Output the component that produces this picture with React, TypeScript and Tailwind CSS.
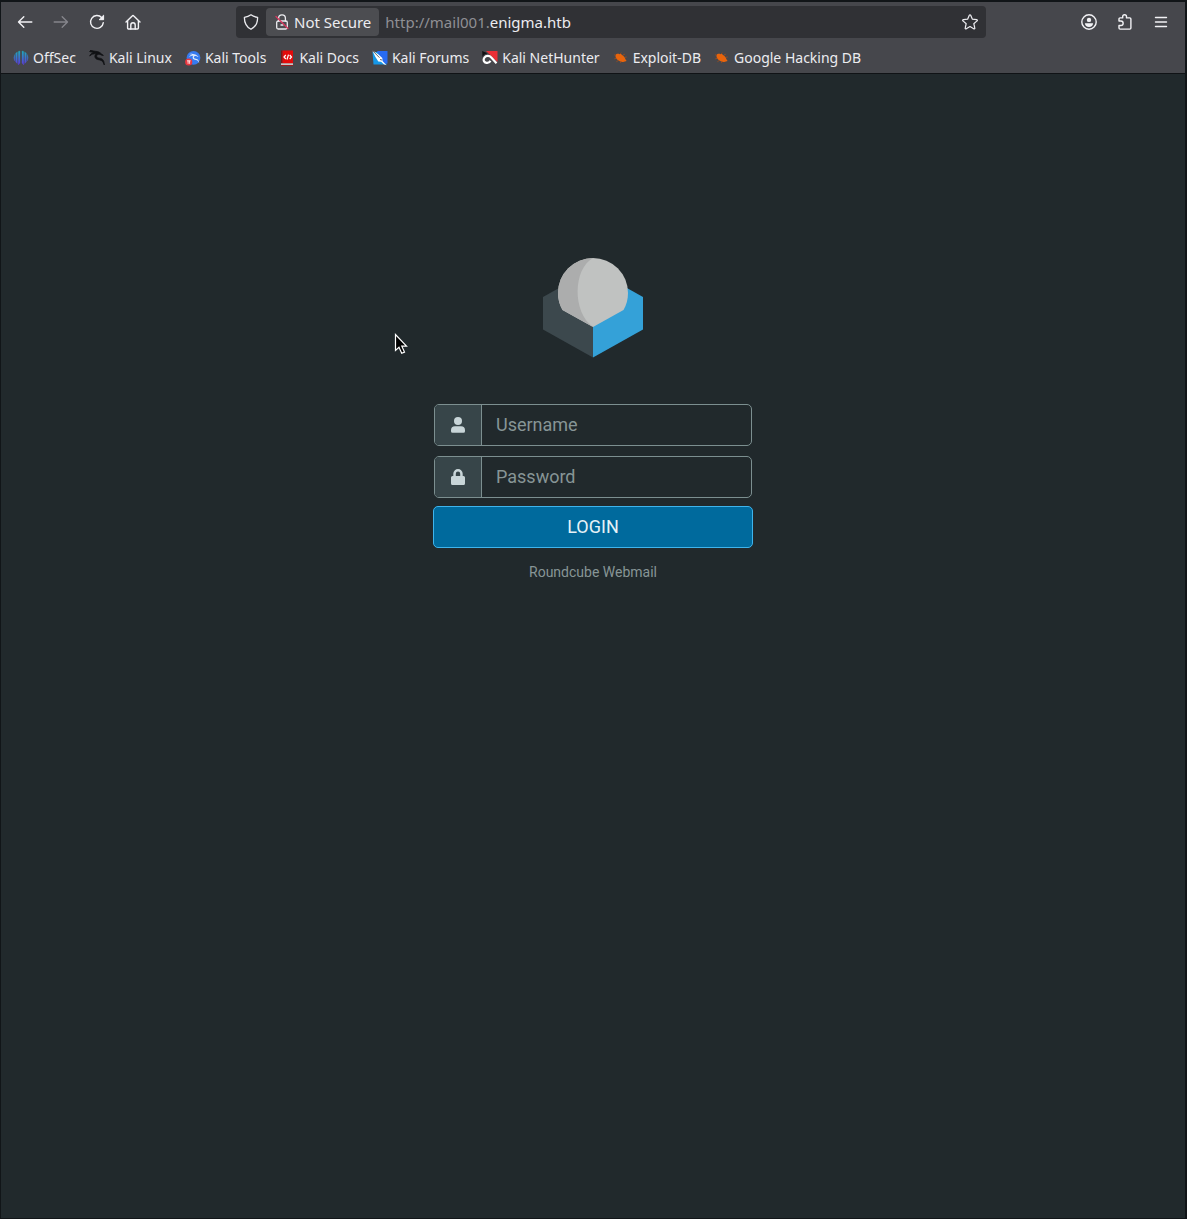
import { useState } from 'react';
import type { ReactNode } from 'react';

const iconProps = {
  width: 16,
  height: 16,
  viewBox: '0 0 16 16',
  fill: 'none',
  stroke: 'currentColor',
  strokeWidth: 1.4,
  strokeLinecap: 'round',
  strokeLinejoin: 'round',
  'aria-hidden': true
} as const;

const BackIcon = () => (
  <svg {...iconProps}>
    <path d="M14.8 8H1.6M6.8 2.7L1.5 8l5.3 5.3" />
  </svg>
);

const ForwardIcon = () => (
  <svg {...iconProps}>
    <path d="M1.2 8h13.2M9.2 2.7L14.5 8l-5.3 5.3" />
  </svg>
);

const ReloadIcon = () => (
  <svg {...iconProps}>
    <path d="M14.3 8.6A6.4 6.4 0 1 1 12.8 3.8" />
    <path d="M14.6 1.6v4.1h-4.1z" fill="currentColor" strokeWidth="1" />
  </svg>
);

const HomeIcon = () => (
  <svg {...iconProps}>
    <path d="M1 8.1l6.2-6.2a1.1 1.1 0 0 1 1.6 0L15 8.1" />
    <path d="M2.6 7v6.9a1.1 1.1 0 0 0 1.1 1.1h8.6a1.1 1.1 0 0 0 1.1-1.1V7" />
    <path d="M5.8 15v-4a2.2 2.2 0 0 1 4.4 0v4" />
  </svg>
);

const ShieldIcon = () => (
  <svg {...iconProps} strokeWidth={1.3}>
    <path d="M8 .8c1.900 1.400 4 2.200 6.600 2.500.1 5.400-1.500 9.300-6.600 12C2.900 12.600 1.300 8.700 1.400 3.300 4 3 6.100 2.200 8 .8z" />
  </svg>
);

const InsecureIcon = () => (
  <svg {...iconProps} strokeWidth={1.3}>
    <path d="M4.600 7V4.200a3.400 3.400 0 0 1 6.800 0V7" />
    <rect x="2.700" y="7" width="10.600" height="8" rx="1.500" />
    <path d="M7 11h2" />
    <path d="M2 2.500l12 12" stroke="#d9375f" />
  </svg>
);

const StarIcon = () => (
  <svg {...iconProps} strokeWidth={1.2}>
    <path d="M7.300 1.300a.8.8 0 0 1 1.400 0l1.700 3.900 4.200.4a.7.7 0 0 1 .4 1.300l-3.200 2.800 1 4.300a.7.7 0 0 1-1.100.8L8 12.500l-3.700 2.300a.7.7 0 0 1-1.100-.8l1-4.300L1 6.900a.7.7 0 0 1 .4-1.300l4.200-.4z" />
  </svg>
);

const AccountIcon = () => (
  <svg {...iconProps}>
    <circle cx="8" cy="8" r="7.200" />
    <circle cx="8" cy="5.900" r="2.200" fill="currentColor" stroke="none" />
    <path d="M3.900 9.300h8.200c0 2.300-1.800 3.700-4.100 3.700s-4.100-1.400-4.100-3.700z" fill="currentColor" stroke="none" />
  </svg>
);

const ExtensionsIcon = () => (
  <svg {...iconProps}>
    <path d="M2 7V5a1.100 1.100 0 0 1 1.100-1.100h2.600V2.600a1.900 1.900 0 0 1 3.800 0v1.300h3.300A1.100 1.100 0 0 1 13.900 5v9a1.100 1.100 0 0 1-1.100 1.100H3.100A1.100 1.100 0 0 1 2 14v-2.500h1.900a2 2 0 0 0 0-4.500z" />
  </svg>
);

const MenuIcon = () => (
  <svg {...iconProps}>
    <path d="M2.500 3.500h11M2.500 8h11M2.500 12.500h11" />
  </svg>
);

const OffSecIcon = () => (
  <svg width="16" height="16" viewBox="0 0 16 16" fill="none" aria-hidden>
    <defs>
      <linearGradient id="offsec" x1="0" y1="0" x2="0" y2="16" gradientUnits="userSpaceOnUse">
        <stop offset="0.1" stopColor="#1fa6bd" />
        <stop offset="0.9" stopColor="#5a3be0" />
      </linearGradient>
    </defs>
    <path
      d="M7 1v12l-1.700 2V1.400zM4.300 2v11.500L2.700 12V3.200zM1.700 4.500v6.500a7 7 0 0 1 0-6.500zM9 1v12l1.700 2V1.400zM11.700 2v11.500l1.600-1.500V3.200zM14.300 4.500v6.500a7 7 0 0 0 0-6.500z"
      fill="url(#offsec)"
      stroke="url(#offsec)"
      strokeWidth=".3"
    />
  </svg>
);

const dragon =
  'M.5 1.500l4.500.2-4-1.200 5.500.8c2.500.1 4.500 1 5.600 2.400l2.300 1.700-1.700-.2-1.700-.8c-1.600-.6-3.600.3-3.300 2 .3 1.600 2.200 1.500 4 2 2.300.7 3.500 2.400 3.600 6.600-1-3.300-2.300-4.700-4.800-5.100-2.500-.3-4.400-1.100-4.600-3.100-.1-1.200.4-2.100 1.200-2.800C4.700 3.500 2.300 4.300.7 6c.7-2 2.400-3.100 4.500-3.400z';

const KaliIcon = () => (
  <svg width="16" height="16" viewBox="0 0 16 16" aria-hidden>
    <path d={dragon} fill="#101114" stroke="#101114" strokeWidth=".8" />
  </svg>
);

const ToolsIcon = () => (
  <svg width="16" height="16" viewBox="0 0 16 16" aria-hidden>
    <circle cx="8.500" cy="7.800" r="6.900" fill="#367bf0" />
    <path d={dragon} fill="#dfe9fb" transform="translate(3.500 3) scale(.7)" />
    <circle cx="3.700" cy="12" r="3.600" fill="#e9363f" />
    <path d="M2 10.800h3.600M3.100 10.800v3M4.600 10.800v3" stroke="#fff" strokeWidth=".8" />
  </svg>
);

const DocsIcon = () => (
  <svg width="16" height="16" viewBox="0 0 16 16" aria-hidden>
    <path d="M2 .5h1.500v13H2z" fill="#811414" />
    <path d="M3.500.5H14v13H3.500z" fill="#e30b0b" />
    <path d="M2 13.300h12v2H2z" fill="#c9c5c5" />
    <path d="M2 15.200h12v.8H2z" fill="#a00c0c" />
    <path d="M6.800 5L5 7l1.800 2M10.700 5l1.800 2-1.800 2M9.500 4.600L8 9.500" fill="none" stroke="#fff" strokeWidth="1.200" />
  </svg>
);

const ForumsIcon = () => (
  <svg width="16" height="16" viewBox="0 0 16 16" aria-hidden>
    <path d="M.5 2H6l9 12.500H1.500z" fill="#1698e8" />
    <path d="M5 1h10.500v12.500H12z" fill="#286bf2" />
    <path d="M.2.3l6.300 4.200 3.800 3.500.2 3 4 4.200-2.700-.9-2.700-2.600-2.800-.3-3-4.700z" fill="#fff" />
    <path d="M.2.3l7.300 7.400M8 9.500l2 .5" stroke="#20242c" strokeWidth=".7" />
  </svg>
);

const NetHunterIcon = () => (
  <svg width="16" height="16" viewBox="0 0 16 16" aria-hidden>
    <path d="M4 1h11.500v11z" fill="#e92f36" />
    <path d="M.2 1l5.300 2.300L2 4.800.5 7z" fill="#101114" />
    <path
      d="M14.500 13.300L9.300 7.500C7.500 5.300 4 5.500 2.400 7.700c-1.600 2.300-.4 4.800 2 5.200 1.800.3 3.300-.6 4-2.200"
      fill="none"
      stroke="#fff"
      strokeWidth="2.200"
    />
  </svg>
);

const BugIcon = () => (
  <svg width="16" height="16" viewBox="0 0 16 16" aria-hidden>
    <path
      d="M2.500 5.200c.6-1.400 2.600-1.700 4.200-1 .9-.5 2 .1 2.300.9 1.700.9 2.900 2.300 3.300 3.900l1.300 2-2.600.8c-2.200.5-4-.1-5.500-1.300C3.600 9.500 2.100 7.300 2.500 5.200z"
      fill="#e8640c"
    />
    <path
      d="M3 5.500L1.200 4.800M3.200 8.200l-1.900.7M5 10.300l-1.500 1.800M8 11.600L7.400 13M7 3.900l1.300-1.200M10 5l1.800-.8M12.100 7.300l1.600-.3"
      stroke="#a84d16"
      strokeWidth=".8"
    />
  </svg>
);

const bookmarks = [
  { title: 'OffSec', icon: <OffSecIcon /> },
  { title: 'Kali Linux', icon: <KaliIcon /> },
  { title: 'Kali Tools', icon: <ToolsIcon /> },
  { title: 'Kali Docs', icon: <DocsIcon /> },
  { title: 'Kali Forums', icon: <ForumsIcon /> },
  { title: 'Kali NetHunter', icon: <NetHunterIcon /> },
  { title: 'Exploit-DB', icon: <BugIcon /> },
  { title: 'Google Hacking DB', icon: <BugIcon /> }
];

const ToolButton = ({ label, disabled, children }: { label: string; disabled?: boolean; children: ReactNode }) => (
  <button
    type="button"
    aria-label={label}
    disabled={disabled}
    className="flex size-9 items-center justify-center rounded text-[#f2f2f5] disabled:text-[#85858b]"
  >
    {children}
  </button>
);

const BrowserBar = () => (
  <header className="border-b border-[#101316] bg-[#46474c] pt-1 text-[15px] text-[#ececf0]">
    <div className="flex h-8 items-center px-1.5">
      <nav className="flex" aria-label="Navigation">
        <ToolButton label="Back"><BackIcon /></ToolButton>
        <ToolButton label="Forward" disabled><ForwardIcon /></ToolButton>
        <ToolButton label="Reload"><ReloadIcon /></ToolButton>
        <ToolButton label="Home"><HomeIcon /></ToolButton>
      </nav>

      <div className="mx-[85px] flex h-8 min-w-0 flex-1 items-center rounded bg-[#303135]">
        <button type="button" aria-label="Tracking protection" className="flex w-[30px] justify-center">
          <ShieldIcon />
        </button>
        <button type="button" className="flex h-7 shrink-0 items-center gap-1 rounded bg-[#4c4d51] px-2">
          <InsecureIcon />
          <span>Not Secure</span>
        </button>
        <span className="min-w-0 flex-1 truncate pl-1.5 text-[#8f8f94]">
          http://mail001.<span className="text-[#ececf0]">enigma.htb</span>
        </span>
        <button type="button" aria-label="Bookmark this page" className="flex size-8 items-center justify-center">
          <StarIcon />
        </button>
      </div>

      <div className="flex">
        <ToolButton label="Account"><AccountIcon /></ToolButton>
        <ToolButton label="Extensions"><ExtensionsIcon /></ToolButton>
        <ToolButton label="Open menu"><MenuIcon /></ToolButton>
      </div>
    </div>

    <nav className="flex h-[35px] items-center gap-[13px] pt-1 pl-3 text-sm" aria-label="Bookmarks">
      {bookmarks.map((bookmark) => (
        <a key={bookmark.title} href="#" className="flex items-center gap-1 whitespace-nowrap">
          {bookmark.icon}
          {bookmark.title}
        </a>
      ))}
    </nav>
  </header>
);

const Logo = () => (
  <svg width="100" height="100" viewBox="0 0 100 100" role="img" aria-label="Roundcube">
    <path d="M0 39L50 11v88.500L0 71.500z" fill="#3c484d" />
    <path d="M100 39L50 11v88.500l50-28z" fill="#34a1d8" />
    <path d="M50 0a35 35 0 0 1 35 35c0 6-1.500 12-4.500 17L50 69 19.500 52C16.500 47 15 41 15 35A35 35 0 0 1 50 0z" fill="#c0c2c1" />
    <path d="M50 0C30 11 29 54 50 69L19.500 52C16.500 47 15 41 15 35A35 35 0 0 1 50 0z" fill="#acadad" />
  </svg>
);

const UserIcon = () => (
  <svg width="14" height="16" viewBox="0 0 14 16" fill="currentColor" aria-hidden>
    <circle cx="7" cy="4" r="4" />
    <path d="M4 9.200h6a4 4 0 0 1 4 4v1a1.500 1.500 0 0 1-1.500 1.500h-11A1.500 1.500 0 0 1 0 14.200v-1a4 4 0 0 1 4-4z" />
  </svg>
);

const LockIcon = () => (
  <svg width="14" height="16" viewBox="0 0 14 16" fill="currentColor" aria-hidden>
    <path d="M12.500 7h-.8V4.700a4.700 4.700 0 0 0-9.400 0V7h-.8A1.500 1.500 0 0 0 0 8.500v6A1.500 1.500 0 0 0 1.500 16h11a1.500 1.500 0 0 0 1.500-1.500v-6A1.500 1.500 0 0 0 12.500 7zM9.200 7H4.800V4.700a2.200 2.200 0 0 1 4.400 0z" />
  </svg>
);

type FieldProps = {
  id: string;
  label: string;
  type: string;
  icon: ReactNode;
  value: string;
  onChange: (value: string) => void;
};

const Field = ({ id, label, type, icon, value, onChange }: FieldProps) => (
  <div className="mx-px flex h-[42px] overflow-hidden rounded-[5px] border border-[#7c8f90]">
    <label
      htmlFor={id}
      title={label}
      className="flex w-[47px] shrink-0 items-center justify-center border-r border-[#7c8f90] bg-[#374549] text-[#c8d5d8]"
    >
      {icon}
    </label>
    <input
      id={id}
      type={type}
      aria-label={label}
      placeholder={label}
      value={value}
      onChange={(e) => onChange(e.target.value)}
      className="min-w-0 flex-1 bg-transparent px-3.5 text-[#c8d5d8] outline-none placeholder:text-[#879596]"
    />
  </div>
);

const Pointer = () => (
  <svg className="pointer-events-none absolute top-[331px] left-[393px]" width="14" height="22" viewBox="0 0 14 22" aria-hidden>
    <path d="M1.500 1.500v16l3.500-3.200 2.700 6 2.800-1.200-2.700-5.900h4.700z" fill="#000" stroke="#fff" strokeWidth="1.200" />
  </svg>
);

export default function App() {
  const [user, setUser] = useState('');
  const [password, setPassword] = useState('');

  return (
    <div className="relative flex min-h-screen flex-col border-t-2 border-r-2 border-b border-l border-[#111518] bg-[#21292c] font-['Noto_Sans',sans-serif]">
      <BrowserBar />

      <main className="flex flex-1 flex-col items-center px-4 pt-[184px] font-[Roboto,sans-serif] text-lg">
        <Logo />
        <form className="mt-[46px] flex w-full max-w-[320px] flex-col" onSubmit={(e) => e.preventDefault()}>
          <div className="mb-2 flex flex-col gap-2.5">
            <Field id="user" label="Username" type="text" icon={<UserIcon />} value={user} onChange={setUser} />
            <Field id="password" label="Password" type="password" icon={<LockIcon />} value={password} onChange={setPassword} />
          </div>
          <button type="submit" className="h-[42px] rounded-[5px] border border-[#3fb4ec] bg-[#006a9d] text-[#e6f2f7]">
            LOGIN
          </button>
        </form>
        <p className="mt-3.5 text-sm text-[#879596]">Roundcube Webmail</p>
      </main>

      <Pointer />
    </div>
  );
}
